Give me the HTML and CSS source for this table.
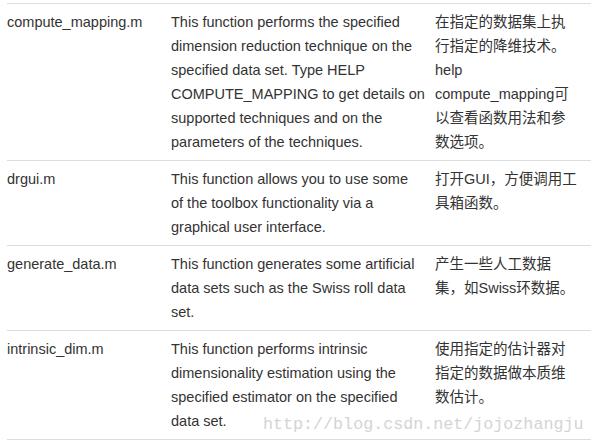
FILE: index.html
```html
<!DOCTYPE html>
<html lang="zh">
<head>
<meta charset="utf-8">
<link rel="stylesheet" href="styles.css">
</head>
<body>
<div class="page">
  <table class="funcs">
    <tr>
      <td class="name">compute_mapping.m</td>
      <td class="desc">This function performs the specified dimension reduction technique on the specified data set. Type HELP COMPUTE_MAPPING to get details on supported techniques and on the parameters of the techniques.</td>
      <td class="zh">在指定的数据集上执行指定的降维技术。help compute_mapping可以查看函数用法和参数选项。</td>
    </tr>
    <tr>
      <td class="name">drgui.m</td>
      <td class="desc">This function allows you to use some<br>of the toolbox functionality via a graphical user interface.</td>
      <td class="zh">打开GUI，方便调用工具箱函数。</td>
    </tr>
    <tr>
      <td class="name">generate_data.m</td>
      <td class="desc">This function generates some artificial data sets such as the Swiss roll data set.</td>
      <td class="zh">产生一些人工数据集，如Swiss环数据。</td>
    </tr>
    <tr>
      <td class="name">intrinsic_dim.m</td>
      <td class="desc">This function performs intrinsic dimensionality estimation using the specified estimator on the specified data set.</td>
      <td class="zh">使用指定的估计器对指定的数据做本质维数估计。</td>
    </tr>
  </table>
  <div class="watermark">http://blog.csdn.net/jojozhangju</div>
</div>
</body>
</html>
```
FILE: styles.css
```css
html, body {
  margin: 0;
  padding: 0;
  background: #fff;
}
.page {
  position: relative;
  width: 595px;
  height: 444px;
  overflow: hidden;
  padding-top: 3px;
  box-sizing: border-box;
}
.funcs {
  margin-left: 7px;
  border-collapse: collapse;
  table-layout: fixed;
  width: 584px;
  font-family: "Liberation Sans", Arial, "Noto Sans CJK SC", sans-serif;
  font-size: 14.5px;
  line-height: 24px;
  color: #333;
}
.funcs tr {
  border-top: 1px solid #ddd;
  border-bottom: 1px solid #ddd;
}
.funcs td {
  vertical-align: top;
  padding: 6px 0 6px 0;
  word-wrap: break-word;
}
.funcs td.name {
  width: 164px;
  padding-right: 8px;
  box-sizing: border-box;
}
.funcs td.desc {
  width: 264px;
  padding-right: 7px;
  box-sizing: border-box;
}
.funcs td.zh {
  width: 156px;
  padding-right: 13px;
  box-sizing: border-box;
}
.watermark {
  position: absolute;
  left: 263px;
  top: 415px;
  font-family: "Liberation Mono", "Courier New", monospace;
  font-size: 16.7px;
  line-height: 20px;
  color: #d4d4d4;
  white-space: nowrap;
}
```
